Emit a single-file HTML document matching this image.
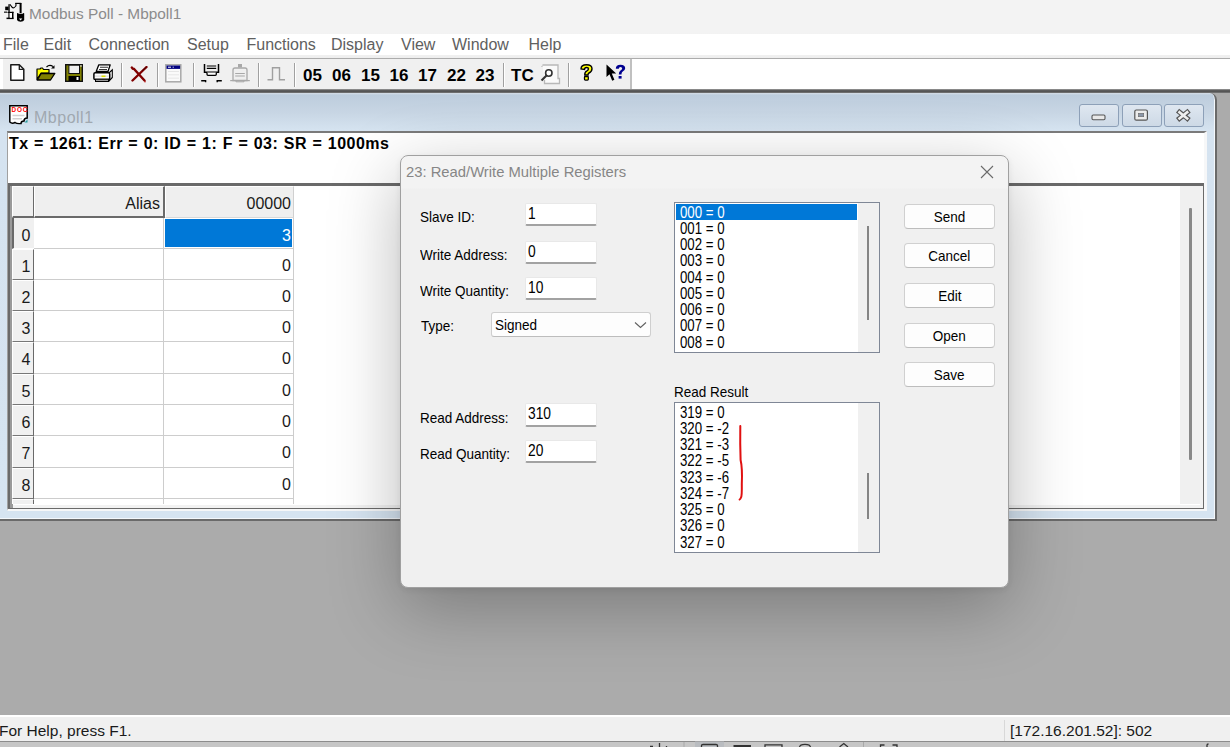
<!DOCTYPE html><html><head><meta charset="utf-8"><style>
*{margin:0;padding:0;box-sizing:border-box}
html,body{width:1230px;height:747px;overflow:hidden;background:#ababab;font-family:"Liberation Sans",sans-serif;position:relative}
.a{position:absolute}
.t{position:absolute;white-space:pre;line-height:1}
.sep{position:absolute;top:63px;width:2px;height:24px;border-left:1px solid #a0a0a0;border-right:1px solid #fff}
.num{position:absolute;top:67px;font-size:17px;font-weight:bold;color:#000;line-height:1}
.lbl{position:absolute;white-space:pre;line-height:1;font-size:15px;color:#000;transform:scaleX(.9);transform-origin:0 0}
.edit{position:absolute;background:#fff;border:1px solid #e8e8e8;border-bottom:2px solid #a2a2a2;border-radius:2px}
.btn{position:absolute;left:904px;width:91px;height:25px;background:#fdfdfd;border:1px solid #d0d0d0;border-bottom-color:#bdbdbd;border-radius:4px;text-align:center}
.btn span{display:inline-block;font-size:15px;line-height:23px;transform:scaleX(.9);color:#000}
.li{position:absolute;left:4.5px;white-space:pre;font-size:15.6px;line-height:1;transform:scaleX(.85);transform-origin:0 0;color:#000}
.rh{position:absolute;left:12px;width:22px;background:#f0f0f0;border-bottom:1px solid #8a8a8a;border-right:2px solid #6a6a6a}
.rht{position:absolute;right:3px;font-size:15px;line-height:1;color:#1a1a1a}
.gl{position:absolute;background:#cdcdcd}
</style></head><body>
<div class="a" style="left:0;top:0;width:1230px;height:33px;background:#f3f3f3"></div>
<svg class="a" style="left:0;top:0" width="28" height="28" viewBox="0 0 28 28">
<g fill="#000">
<rect x="5.2" y="6.6" width="3.4" height="3.6"/><rect x="4" y="11.6" width="3" height="1.1"/>
<rect x="8.4" y="4.2" width="1.3" height="14.2"/><rect x="6.5" y="17.6" width="7" height="1.5"/>
<rect x="12" y="11.8" width="1.5" height="7"/><rect x="7.5" y="11.8" width="6" height="1.2"/>
<path d="M9.5 4.5 L11.5 7.5 Q13 9 14.5 8 L16.5 6 L16.5 3.5 L15.5 3 L15.3 6 L14 7.2 Q13 7.6 12.2 6.6 L10.3 4 Z"/>
<rect x="15.2" y="2.8" width="6" height="1.2"/><rect x="19.6" y="3" width="2" height="10"/>
<path d="M17 13.2 L18 13 L18.6 13.8 H22.6 L23.4 13 L24.2 13.2 V20 Q23.5 21.8 20.6 21.8 Q17.8 21.8 17 20 Z"/>
</g><path d="M19 18.6 H22.3 L20.6 20.6 Z" fill="#fff"/><rect x="9.7" y="13" width="2.3" height="4.6" fill="#fff"/>
</svg>
<span class="t" style="left:29px;top:6px;font-size:15.4px;color:#8c8c8c">Modbus Poll - Mbpoll1</span>
<div class="a" style="left:0;top:33px;width:1230px;height:26px;background:linear-gradient(#e6e6e6 0,#fff 1px,#fff 22px,#f0f0f0 22.5px,#eeeeee 25px,#a8a8a8 25px,#b0b0b0 26px)"></div>
<span class="t" style="left:3px;top:37px;font-size:16px;color:#606060">File</span>
<span class="t" style="left:43.5px;top:37px;font-size:16px;color:#606060">Edit</span>
<span class="t" style="left:88.5px;top:37px;font-size:16px;color:#606060">Connection</span>
<span class="t" style="left:187px;top:37px;font-size:16px;color:#606060">Setup</span>
<span class="t" style="left:246.5px;top:37px;font-size:16px;color:#606060">Functions</span>
<span class="t" style="left:331px;top:37px;font-size:16px;color:#606060">Display</span>
<span class="t" style="left:401px;top:37px;font-size:16px;color:#606060">View</span>
<span class="t" style="left:452px;top:37px;font-size:16px;color:#606060">Window</span>
<span class="t" style="left:528.5px;top:37px;font-size:16px;color:#606060">Help</span>
<div class="a" style="left:0;top:59px;width:1230px;height:30px;background:#fff"></div>
<div class="a" style="left:3px;top:59px;width:627px;height:30px;background:#f0f0f0"></div>
<div class="sep" style="left:121px"></div>
<div class="sep" style="left:157px"></div>
<div class="sep" style="left:193px"></div>
<div class="sep" style="left:258px"></div>
<div class="sep" style="left:294px"></div>
<div class="sep" style="left:503px"></div>
<div class="sep" style="left:568px"></div>
<div class="a" style="left:630px;top:59px;width:1.5px;height:30px;background:#c0c0c0"></div>
<span class="num" style="left:303px">05</span>
<span class="num" style="left:332px">06</span>
<span class="num" style="left:361px">15</span>
<span class="num" style="left:389.5px">16</span>
<span class="num" style="left:418px">17</span>
<span class="num" style="left:447px">22</span>
<span class="num" style="left:475.5px">23</span>
<span class="num" style="left:511px">TC</span>

<svg class="a" style="left:10px;top:64px" width="15" height="17" viewBox="0 0 15 17">
<path d="M0.8 0.8 H9.3 L13.8 5.3 V16.2 H0.8 Z" fill="#fff" stroke="#1a1a1a" stroke-width="1.5" stroke-linejoin="round"/><path d="M9.3 0.8 V5.3 H13.8" fill="none" stroke="#1a1a1a" stroke-width="1.3"/></svg>

<svg class="a" style="left:36px;top:64px" width="20" height="17" viewBox="0 0 20 17">
<path d="M1 5 H4 L5 4 H6.5 L7.5 5.5 H13 V9 H5 L1 15.5 Z" fill="#ffff00" stroke="#000" stroke-width="1.2" stroke-linejoin="round"/>
<path d="M1.2 16 L5.2 9.5 H18.8 L14.5 16 Z" fill="#808000" stroke="#000" stroke-width="1.3" stroke-linejoin="round"/>
<path d="M10.5 3 Q13.5 0 17 2.5" fill="none" stroke="#000" stroke-width="1.1"/><path d="M15 4.5 H18.5 V1.2 Z" fill="#000"/></svg>

<svg class="a" style="left:65px;top:64px" width="18" height="18" viewBox="0 0 18 18">
<rect x="0.7" y="0.7" width="16.6" height="16.6" fill="#808000" stroke="#111" stroke-width="1.4"/>
<rect x="3.9" y="1.2" width="10.6" height="8.3" fill="#f0f0f0" stroke="#111" stroke-width="1"/>
<rect x="3.5" y="12" width="11.5" height="5" fill="#000"/><rect x="11.5" y="13" width="2" height="3" fill="#fff"/><rect x="15.2" y="1.2" width="1.5" height="1.5" fill="#ddd"/></svg>

<svg class="a" style="left:93px;top:64px" width="20" height="18" viewBox="0 0 20 18">
<path d="M5.8 0.8 H17.2 L15 7.5 H3.2 Z" fill="#fff" stroke="#000" stroke-width="1.3" stroke-linejoin="round"/>
<path d="M7 3.2 H15 M6 5.5 H14" stroke="#333" stroke-width="1.1"/>
<path d="M16.5 8.5 L19.3 5.8 V13.5 L16.5 16.5 Z" fill="#fff" stroke="#000" stroke-width="1.1"/>
<rect x="0.9" y="8.7" width="15.8" height="6.8" rx="1.3" fill="#fff" stroke="#000" stroke-width="1.5"/>
<rect x="2" y="11.3" width="13.6" height="1.8" fill="#e4e4e4"/><rect x="8.5" y="11.5" width="4" height="1.6" fill="#e0e000"/>
<rect x="2.5" y="15.2" width="13" height="2.3" fill="#999" stroke="#000" stroke-width="1"/></svg>

<svg class="a" style="left:130px;top:66px" width="18" height="17" viewBox="0 0 18 17">
<path d="M1.8 1.5 Q2.5 3 4 3 L14.5 14.5" stroke="#800000" stroke-width="2.4" stroke-linecap="round" fill="none"/>
<path d="M16.5 1 L2.5 14.5" stroke="#800000" stroke-width="2.4" stroke-linecap="round"/>
<path d="M12 4.8 L16.5 1" stroke="#200000" stroke-width="1" opacity=".6"/><circle cx="15" cy="15.8" r="0.8" fill="#c02020"/></svg>

<svg class="a" style="left:165px;top:64px" width="17" height="19" viewBox="0 0 17 19">
<rect x="0.8" y="0.8" width="15" height="17" fill="#fafafa" stroke="#a8a8a8" stroke-width="1.5"/><rect x="1.5" y="1.5" width="13.6" height="3.4" fill="#000080"/>
<rect x="3" y="2.7" width="3" height="1" fill="#fff"/><rect x="7.7" y="2.7" width="1" height="1" fill="#fff"/>
<path d="M3 7.5 H14 M3 10.8 H14 M3 14.2 H14" stroke="#e6e6e6" stroke-width="1"/></svg>

<svg class="a" style="left:201px;top:64px" width="21" height="19" viewBox="0 0 21 19">
<path d="M3.5 0 V8.2 H17.5 V0" fill="none" stroke="#000" stroke-width="1.5"/>
<path d="M5.8 2 H15.2 M5.8 4.3 H15.2" stroke="#000" stroke-width="1.2"/>
<path d="M6 8.5 V10.3 Q6 11.3 7 11.3 H14.3 Q15.3 11.3 15.3 10.3 V8.5" fill="#fff" stroke="#000" stroke-width="1.3"/>
<path d="M0.2 16.8 H4.6 V18.2 M20.8 16.8 H16.2 V18.2" fill="none" stroke="#000" stroke-width="1.4"/></svg>

<svg class="a" style="left:230px;top:64px" width="20" height="19" viewBox="0 0 20 19">
<rect x="8" y="0" width="4" height="3.5" fill="#a8a8a8"/>
<path d="M3 6 Q3 4 5 4 H15 Q17 4 17 6 V16.5 H3 Z" fill="#efefef" stroke="#a8a8a8" stroke-width="1.3"/>
<path d="M5.2 9.5 H14.8 M5.2 12 H14.8" stroke="#a8a8a8" stroke-width="1.2"/><path d="M0.2 16.6 H19.8" stroke="#a8a8a8" stroke-width="1.2"/>
<path d="M6 16 V17.8 H14 V16" fill="none" stroke="#a8a8a8" stroke-width="1"/></svg>

<svg class="a" style="left:267px;top:66px" width="19" height="16" viewBox="0 0 19 16">
<path d="M0.5 13.8 H5.5 V1.8 H12.5 V13.8 H18" fill="none" stroke="#a0a0a0" stroke-width="1.4"/></svg>

<svg class="a" style="left:540px;top:64px" width="21" height="21" viewBox="0 0 21 21">
<path d="M2.5 1 H18 V14.5 H19.5 V19.5 H4.5 V16" fill="#fafafa" stroke="#b8b8b8" stroke-width="1.3"/><path d="M2.5 1 V3 H1 Z" fill="#b8b8b8"/>
<circle cx="8.8" cy="9" r="3.2" fill="#fff" stroke="#333" stroke-width="1.6"/><path d="M6.5 11.5 L1.5 16.5" stroke="#333" stroke-width="2.2"/></svg>

<svg class="a" style="left:579px;top:64px" width="15" height="17" viewBox="0 0 15 17">
<path d="M2 5 Q2 0.8 7.5 0.8 Q13 0.8 13 4.8 Q13 7.5 10 9 Q9 9.5 9 11 H5.8 Q5.5 8 8 6.8 Q9.5 6 9.5 4.8 Q9.5 3.5 7.6 3.5 Q5.5 3.5 5.5 5.5 Z" fill="#ffff00" stroke="#000" stroke-width="1.4"/>
<rect x="5.5" y="12.5" width="3.8" height="3.6" rx="0.8" fill="#ffff00" stroke="#000" stroke-width="1.3"/></svg>

<svg class="a" style="left:606px;top:64px" width="20" height="19" viewBox="0 0 20 19">
<path d="M0.5 0.5 L0.5 13 L3.5 10.2 L6.2 16.8 L8.4 15.8 L5.8 9.6 L10.2 9.6 Z" fill="#000"/>
<path d="M9.8 4.8 Q9.8 0.8 14.5 0.8 Q19.2 0.8 19.2 4.3 Q19.2 6.8 16.2 8 Q15.5 8.5 15.5 10.5 H12.8 Q12.8 7.5 14.5 6.5 Q16.2 5.6 16.2 4.5 Q16.2 3 14.5 3 Q12.8 3 12.8 4.8 Z" fill="#000090"/>
<rect x="12.6" y="12" width="3" height="2.6" fill="#000090"/></svg>

<div class="a" style="left:0;top:88.5px;width:1230px;height:4.5px;background:linear-gradient(#a0a0a0 0,#5c5c5c 1.5px,#555 2.5px,#6e6e6e 3.5px,#c8d2dc 4.5px)"></div>
<div class="a" style="left:-10px;top:93px;width:1227px;height:428px;background:linear-gradient(#d6dee8 0,#bdcddd 2px,#c8d6e4 20px,#d5e3f0 37px,#d6e4f1 100%);border-top-right-radius:7px;border-right:2px solid #6a6a6a;border-bottom:2px solid #6a6a6a;box-shadow:inset -1px -1px 0 #f4f8fc"></div>
<svg class="a" style="left:9px;top:105px" width="20" height="20" viewBox="0 0 20 20">
<path d="M0.8 0.8 H18.2 V13 Q15 13 15 16 Q12 16 12 18.5 Q8 19 6 17.5 Q3 19 0.8 17 Z" fill="#fff" stroke="#000" stroke-width="1.5"/>
<text x="2.4" y="7.2" font-family="Liberation Sans" font-weight="bold" font-size="6.4" fill="#f00" letter-spacing="0.9">DOC</text>
<path d="M3.5 10.5 H15.5 M3.5 13.8 H13" stroke="#d0d0d0" stroke-width="1.4"/><path d="M15.5 17.5 L18.5 14.5 V17.5 Z" fill="#2a9d9d"/></svg>
<span class="t" style="left:34px;top:109.5px;font-size:16px;letter-spacing:.5px;color:#a0a8b0">Mbpoll1</span>
<div class="a" style="left:1079px;top:104px;width:40px;height:23px;border:1px solid #8da0b8;border-radius:3px;background:linear-gradient(#dfe7f0,#cdd9e6)"></div>
<div class="a" style="left:1121.5px;top:104px;width:40px;height:23px;border:1px solid #8da0b8;border-radius:3px;background:linear-gradient(#dfe7f0,#cdd9e6)"></div>
<div class="a" style="left:1164px;top:104px;width:40px;height:23px;border:1px solid #8da0b8;border-radius:3px;background:linear-gradient(#dfe7f0,#cdd9e6)"></div>
<svg class="a" style="left:1079px;top:104px" width="125" height="23" viewBox="0 0 125 23">
<rect x="13" y="11" width="13" height="4.8" rx="1.2" fill="#e8e8e8" stroke="#555" stroke-width="1.1"/>
<rect x="55.8" y="6" width="12.6" height="10.2" rx="1.5" fill="#ececec" stroke="#555" stroke-width="1.2"/><rect x="59.5" y="9.3" width="5.2" height="3.4" fill="#8a96a8" stroke="#666" stroke-width=".6"/>
<path d="M100.5 8.2 L108.2 14.4 M108.2 8.2 L100.5 14.4" stroke="#555" stroke-width="5" stroke-linecap="square"/>
<path d="M100.5 8.2 L108.2 14.4 M108.2 8.2 L100.5 14.4" stroke="#eeeeee" stroke-width="2.6" stroke-linecap="square"/>
</svg>
<div class="a" style="left:7px;top:131px;width:1200px;height:380px;background:#fff;border-top:2px solid #7a7a7a;border-left:1px solid #a0a0a0;border-right:3px solid #f6f7f8;border-bottom:3px solid #f6f7f8"></div>
<span class="t" style="left:9px;top:136px;font-size:16px;font-weight:bold;color:#000;word-spacing:.5px;letter-spacing:.5px">Tx = 1261: Err = 0: ID = 1: F = 03: SR = 1000ms</span>
<div class="a" style="left:8px;top:183px;width:1196px;height:326px;background:#fff;border:1px solid #6a6a6a;border-top-width:3px;border-left-width:2px;box-shadow:inset 3px 0 0 #9a9a9a,inset -3px -3px 0 #f2f2f2"></div>
<div class="a" style="left:1180px;top:186px;width:20px;height:318px;background:#f0f0f0"></div>
<div class="a" style="left:1189px;top:207.5px;width:2.5px;height:252px;background:#888;border-radius:1px"></div>
<div class="a" style="left:12px;top:186px;width:22px;height:32px;background:#efefef;border-top:1px solid #fff;border-left:1px solid #fff;border-right:1px solid #6a6a6a;border-bottom:2px solid #6a6a6a"></div>
<div class="a" style="left:34px;top:186px;width:131px;height:32px;background:#efefef;border-top:1px solid #fff;border-left:1px solid #fff;border-right:2px solid #6a6a6a;border-bottom:2px solid #6a6a6a"></div>
<div class="a" style="left:165px;top:186px;width:129px;height:32px;background:#efefef;border-top:1px solid #fff;border-left:1px solid #fff;border-right:1px solid #d0d0d0;border-bottom:1px solid #d8d8d8"></div>
<div class="t" style="left:60px;width:100px;text-align:right;top:195.5px;font-size:16px;color:#1a1a1a">Alias</div>
<div class="t" style="left:191px;width:100px;text-align:right;top:195.5px;font-size:16px;color:#1a1a1a">00000</div>
<div class="a" style="left:12px;top:218px;width:22px;height:31px;background:#f0f0f0;border-left:2px solid #6a6a6a;border-bottom:1px solid #fff"></div>
<span class="t" style="left:21.5px;top:227.5px;font-size:16px;color:#1a1a1a">0</span>
<div class="gl" style="left:34px;top:248px;width:260px;height:1px"></div>
<div class="a" style="left:12px;top:249px;width:22px;height:31px;background:#f0f0f0;border-left:1px solid #fff;border-top:1px solid #fff;border-right:1px solid #6a6a6a;border-bottom:1px solid #777"></div>
<span class="t" style="left:21.5px;top:258.5px;font-size:16px;color:#1a1a1a">1</span>
<div class="gl" style="left:34px;top:279px;width:260px;height:1px"></div>
<div class="a" style="left:12px;top:280px;width:22px;height:31px;background:#f0f0f0;border-left:1px solid #fff;border-top:1px solid #fff;border-right:1px solid #6a6a6a;border-bottom:1px solid #777"></div>
<span class="t" style="left:21.5px;top:289.5px;font-size:16px;color:#1a1a1a">2</span>
<div class="gl" style="left:34px;top:310px;width:260px;height:1px"></div>
<div class="a" style="left:12px;top:311px;width:22px;height:31px;background:#f0f0f0;border-left:1px solid #fff;border-top:1px solid #fff;border-right:1px solid #6a6a6a;border-bottom:1px solid #777"></div>
<span class="t" style="left:21.5px;top:320.5px;font-size:16px;color:#1a1a1a">3</span>
<div class="gl" style="left:34px;top:341px;width:260px;height:1px"></div>
<div class="a" style="left:12px;top:342px;width:22px;height:32px;background:#f0f0f0;border-left:1px solid #fff;border-top:1px solid #fff;border-right:1px solid #6a6a6a;border-bottom:1px solid #777"></div>
<span class="t" style="left:21.5px;top:351.5px;font-size:16px;color:#1a1a1a">4</span>
<div class="gl" style="left:34px;top:373px;width:260px;height:1px"></div>
<div class="a" style="left:12px;top:374px;width:22px;height:31px;background:#f0f0f0;border-left:1px solid #fff;border-top:1px solid #fff;border-right:1px solid #6a6a6a;border-bottom:1px solid #777"></div>
<span class="t" style="left:21.5px;top:383.5px;font-size:16px;color:#1a1a1a">5</span>
<div class="gl" style="left:34px;top:404px;width:260px;height:1px"></div>
<div class="a" style="left:12px;top:405px;width:22px;height:31px;background:#f0f0f0;border-left:1px solid #fff;border-top:1px solid #fff;border-right:1px solid #6a6a6a;border-bottom:1px solid #777"></div>
<span class="t" style="left:21.5px;top:414.5px;font-size:16px;color:#1a1a1a">6</span>
<div class="gl" style="left:34px;top:435px;width:260px;height:1px"></div>
<div class="a" style="left:12px;top:436px;width:22px;height:32px;background:#f0f0f0;border-left:1px solid #fff;border-top:1px solid #fff;border-right:1px solid #6a6a6a;border-bottom:1px solid #777"></div>
<span class="t" style="left:21.5px;top:445.5px;font-size:16px;color:#1a1a1a">7</span>
<div class="gl" style="left:34px;top:467px;width:260px;height:1px"></div>
<div class="a" style="left:12px;top:468px;width:22px;height:31px;background:#f0f0f0;border-left:1px solid #fff;border-top:1px solid #fff;border-right:1px solid #6a6a6a;border-bottom:1px solid #777"></div>
<span class="t" style="left:21.5px;top:477.5px;font-size:16px;color:#1a1a1a">8</span>
<div class="gl" style="left:34px;top:498px;width:260px;height:1px"></div>
<div class="a" style="left:12px;top:499px;width:22px;height:5px;background:#f0f0f0;border-left:1px solid #fff;border-top:1px solid #fff;border-right:1px solid #6a6a6a;"></div>
<div class="gl" style="left:163px;top:218px;width:1px;height:286px"></div>
<div class="gl" style="left:293px;top:218px;width:1px;height:286px"></div>
<div class="a" style="left:165px;top:219px;width:127px;height:28px;background:#0078d7"></div>
<div class="t" style="left:191px;width:100px;text-align:right;top:228px;font-size:16px;color:#fff">3</div>
<div class="t" style="left:191px;width:100px;text-align:right;top:258px;font-size:16px;color:#1a1a1a">0</div>
<div class="t" style="left:191px;width:100px;text-align:right;top:289px;font-size:16px;color:#1a1a1a">0</div>
<div class="t" style="left:191px;width:100px;text-align:right;top:320px;font-size:16px;color:#1a1a1a">0</div>
<div class="t" style="left:191px;width:100px;text-align:right;top:351px;font-size:16px;color:#1a1a1a">0</div>
<div class="t" style="left:191px;width:100px;text-align:right;top:383px;font-size:16px;color:#1a1a1a">0</div>
<div class="t" style="left:191px;width:100px;text-align:right;top:414px;font-size:16px;color:#1a1a1a">0</div>
<div class="t" style="left:191px;width:100px;text-align:right;top:445px;font-size:16px;color:#1a1a1a">0</div>
<div class="t" style="left:191px;width:100px;text-align:right;top:477px;font-size:16px;color:#1a1a1a">0</div>
<div class="a" style="left:400px;top:155px;width:609px;height:433px;border-radius:8px;border:1px solid #a0a0a0;background:linear-gradient(#f3f3f3 0,#f3f3f3 32px,#f0f0f0 33px);box-shadow:0 20px 70px rgba(0,0,0,.28),0 2px 6px rgba(0,0,0,.07)"></div>
<span class="t" style="left:406px;top:165px;font-size:14.8px;color:#868686">23: Read/Write Multiple Registers</span>
<svg class="a" style="left:980px;top:165px" width="14" height="14" viewBox="0 0 14 14"><path d="M1 1 L13 13 M13 1 L1 13" stroke="#6a6a6a" stroke-width="1.1"/></svg>
<span class="lbl" style="left:420px;top:208.6px">Slave ID:</span>
<div class="edit" style="left:525px;top:203px;width:72px;height:23px"></div>
<span class="lbl" style="left:527.5px;top:206px;font-size:15.7px;transform:scaleX(.88)">1</span>
<span class="lbl" style="left:420px;top:246.9px">Write Address:</span>
<div class="edit" style="left:525px;top:240.5px;width:72px;height:23.0px"></div>
<span class="lbl" style="left:527.5px;top:243.5px;font-size:15.7px;transform:scaleX(.88)">0</span>
<span class="lbl" style="left:420px;top:282.7px">Write Quantity:</span>
<div class="edit" style="left:525px;top:276.5px;width:72px;height:23.5px"></div>
<span class="lbl" style="left:527.5px;top:279.5px;font-size:15.7px;transform:scaleX(.88)">10</span>
<span class="lbl" style="left:420px;top:409.7px">Read Address:</span>
<div class="edit" style="left:525px;top:403px;width:72px;height:23.5px"></div>
<span class="lbl" style="left:527.5px;top:406px;font-size:15.7px;transform:scaleX(.88)">310</span>
<span class="lbl" style="left:420px;top:445.7px">Read Quantity:</span>
<div class="edit" style="left:525px;top:439.5px;width:72px;height:23.0px"></div>
<span class="lbl" style="left:527.5px;top:442.5px;font-size:15.7px;transform:scaleX(.88)">20</span>
<span class="lbl" style="left:420.5px;top:318.3px">Type:</span>
<div class="a" style="left:491px;top:312px;width:160px;height:25px;background:#fdfdfd;border:1px solid #cfcfcf;border-bottom-color:#bdbdbd;border-radius:3px"></div>
<span class="lbl" style="left:495px;top:316.5px">Signed</span>
<svg class="a" style="left:634px;top:321px" width="13" height="8" viewBox="0 0 13 8"><path d="M1 1.5 L6.5 6.5 L12 1.5" fill="none" stroke="#606060" stroke-width="1.1"/></svg>
<div class="a" style="left:674px;top:202px;width:206px;height:151px;background:#fff;border:1px solid #7f8796;overflow:hidden">
<div class="a" style="left:1px;top:1px;width:181px;height:16px;background:#0078d7"></div>
<span class="li" style="top:1.5px;color:#fff">000 = 0</span>
<span class="li" style="top:17.75px;color:#000">001 = 0</span>
<span class="li" style="top:34.0px;color:#000">002 = 0</span>
<span class="li" style="top:50.25px;color:#000">003 = 0</span>
<span class="li" style="top:66.5px;color:#000">004 = 0</span>
<span class="li" style="top:82.75px;color:#000">005 = 0</span>
<span class="li" style="top:99.0px;color:#000">006 = 0</span>
<span class="li" style="top:115.25px;color:#000">007 = 0</span>
<span class="li" style="top:131.5px;color:#000">008 = 0</span>
<div class="a" style="left:183px;top:0;width:21px;height:149px;background:#f0f0f0"></div>
<div class="a" style="left:191.5px;top:23px;width:2.5px;height:94px;background:#858585"></div>
</div>
<span class="lbl" style="left:674px;top:384.3px">Read Result</span>
<div class="a" style="left:674px;top:402px;width:206px;height:151px;background:#fff;border:1px solid #7f8796;overflow:hidden">
<span class="li" style="top:1.5px">319 = 0</span>
<span class="li" style="top:17.75px">320 = -2</span>
<span class="li" style="top:34.0px">321 = -3</span>
<span class="li" style="top:50.25px">322 = -5</span>
<span class="li" style="top:66.5px">323 = -6</span>
<span class="li" style="top:82.75px">324 = -7</span>
<span class="li" style="top:99.0px">325 = 0</span>
<span class="li" style="top:115.25px">326 = 0</span>
<span class="li" style="top:131.5px">327 = 0</span>
<div class="a" style="left:183px;top:0;width:21px;height:149px;background:#f0f0f0"></div>
<div class="a" style="left:191.5px;top:70px;width:2.5px;height:46px;background:#858585"></div>
</div>
<svg class="a" style="left:736px;top:424px" width="10" height="78" viewBox="0 0 10 78"><path d="M4.3 2 Q4 20 4.6 36 Q6.5 44 5.8 60 Q6 72 5 73.5 Q4.5 75 3.6 75.5" fill="none" stroke="#e01010" stroke-width="2" stroke-linecap="round"/></svg>
<div class="btn" style="top:203.5px"><span>Send</span></div>
<div class="btn" style="top:242.5px"><span>Cancel</span></div>
<div class="btn" style="top:283px"><span>Edit</span></div>
<div class="btn" style="top:322.5px"><span>Open</span></div>
<div class="btn" style="top:362px"><span>Save</span></div>
<div class="a" style="left:0;top:715px;width:1230px;height:26px;background:#f0f0f0;border-top:2px solid #fff"></div>
<span class="t" style="left:-1px;top:723px;font-size:15.5px;color:#1a1a1a">For Help, press F1.</span>
<div class="a" style="left:1004px;top:720px;width:1px;height:21px;background:#d8d8d8"></div>
<span class="t" style="left:1010px;top:723px;font-size:15.5px;color:#1a1a1a">[172.16.201.52]: 502</span>
<div class="a" style="left:0;top:740.5px;width:1230px;height:6.5px;background:#c6c6c6;border-top:1.5px solid #8c8c8c"></div>
<svg class="a" style="left:0;top:740px" width="1230" height="7" viewBox="0 0 1230 7">
<rect x="695" y="1.5" width="29" height="6" fill="#b9bcc0"/>
<g fill="none" stroke="#333" stroke-width="1.3">
<path d="M650 6.5 H653 M659.5 3 V7 M666.5 6 V7"/>
<path d="M701.5 7.5 V5.5 Q701.5 4.5 703 4.5 H716 Q717.5 4.5 717.5 5.5 V7.5"/>
<path d="M765 7.5 V4.8 H782 V7.5"/>
<path d="M799.5 7.5 Q799.5 4.3 805 4.3 Q810.5 4.3 810.5 7.5"/>
<path d="M839.5 7 L843.8 3.5 L848 7"/>
<path d="M880.5 7.5 V5 H884.5 M892.5 5 H897 V7.5"/>
<path d="M1207 7 V5 Q1207 4 1208.5 4"/>
</g>
<rect x="733.5" y="5" width="17.5" height="2.5" fill="#333"/>
<path d="M684 2 V7 M863.5 2 V7" stroke="#a8a8a8" stroke-width="1"/>
</svg>
</body></html>
